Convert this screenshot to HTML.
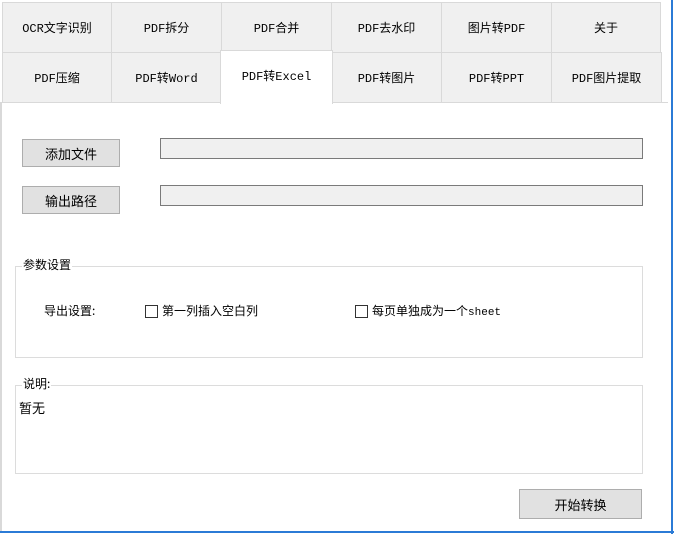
<!DOCTYPE html>
<html><head><meta charset="utf-8"><style>
*{margin:0;padding:0;box-sizing:border-box}
body{width:674px;height:534px;background:#fff;position:relative;overflow:hidden;font-family:"Liberation Mono","Noto Sans CJK SC",monospace;font-size:12px;color:#000}
.a{position:absolute}
.tab{position:absolute;background:#f0f0f0;border:1px solid #d9d9d9;display:flex;align-items:center;justify-content:center;font-size:12px}
.btn{position:absolute;background:#e1e1e1;border:1px solid #adadad;display:flex;align-items:center;justify-content:center;font-family:"Noto Sans CJK SC",sans-serif;font-size:13px}
.fld{position:absolute;background:#f0f0f0;border:1px solid #7a7a7a}
.grp{position:absolute;border:1px solid #dcdcdc}
.lbl{position:absolute;background:#fff;padding:0 1px;font-family:"Noto Sans CJK SC",sans-serif;font-size:12px;line-height:14px}
.cb{position:absolute;width:13px;height:13px;border:1px solid #333;background:#fff}
.t{position:absolute;font-family:"Noto Sans CJK SC",sans-serif;font-size:12px;line-height:14px;white-space:nowrap}
</style></head><body>
<div class="a" style="left:0;top:102px;width:668px;height:430px;border-left:2px solid #d9d9d9;border-top:1px solid #d9d9d9"></div>
<div class="a" style="left:671px;top:0;width:2px;height:534px;background:#2b7bd6"></div>
<div class="a" style="left:0;top:531px;width:674px;height:2px;background:#2b7bd6"></div>

<div class="tab" style="left:2px;top:2px;width:110px;height:51px">OCR文字识别</div>
<div class="tab" style="left:111px;top:2px;width:111px;height:51px">PDF拆分</div>
<div class="tab" style="left:221px;top:2px;width:111px;height:51px">PDF合并</div>
<div class="tab" style="left:331px;top:2px;width:111px;height:51px">PDF去水印</div>
<div class="tab" style="left:441px;top:2px;width:111px;height:51px">图片转PDF</div>
<div class="tab" style="left:551px;top:2px;width:110px;height:51px">关于</div>

<div class="tab" style="left:2px;top:52px;width:110px;height:51px">PDF压缩</div>
<div class="tab" style="left:111px;top:52px;width:111px;height:51px">PDF转Word</div>
<div class="tab" style="left:331px;top:52px;width:111px;height:51px">PDF转图片</div>
<div class="tab" style="left:441px;top:52px;width:111px;height:51px">PDF转PPT</div>
<div class="tab" style="left:551px;top:52px;width:111px;height:51px">PDF图片提取</div>
<div class="tab" style="left:220px;top:50px;width:113px;height:54px;background:#fff;border-bottom:none;padding-bottom:4px">PDF转Excel</div>

<div class="btn" style="left:22px;top:139px;width:98px;height:28px">添加文件</div>
<div class="btn" style="left:22px;top:186px;width:98px;height:28px">输出路径</div>
<div class="fld" style="left:160px;top:138px;width:483px;height:21px"></div>
<div class="fld" style="left:160px;top:185px;width:483px;height:21px"></div>

<div class="grp" style="left:15px;top:266px;width:628px;height:92px"></div>
<div class="lbl" style="left:22px;top:258px">参数设置</div>
<div class="t" style="left:44px;top:304px">导出设置:</div>
<div class="cb" style="left:145px;top:305px"></div>
<div class="t" style="left:162px;top:304px">第一列插入空白列</div>
<div class="cb" style="left:355px;top:305px"></div>
<div class="t" style="left:372px;top:304px">每页单独成为一个<span style="font-family:'Liberation Mono',monospace;font-size:11px">sheet</span></div>

<div class="grp" style="left:15px;top:385px;width:628px;height:89px"></div>
<div class="lbl" style="left:22px;top:377px">说明:</div>
<div class="t" style="left:19px;top:401px;font-size:13px">暂无</div>

<div class="btn" style="left:519px;top:489px;width:123px;height:30px;background:#e1e1e1">开始转换</div>
</body></html>
